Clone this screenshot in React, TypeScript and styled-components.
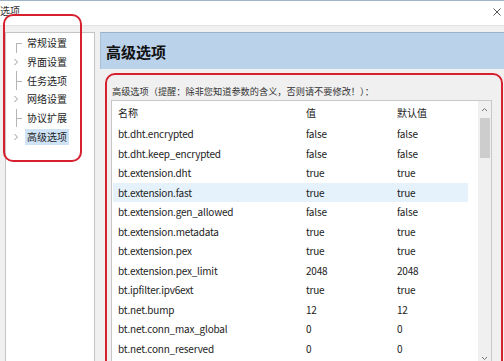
import React from 'react';
import styled, { createGlobalStyle } from 'styled-components';

const Global = createGlobalStyle`
  html, body { margin: 0; padding: 0; }
  body {
    width: 504px; height: 361px; overflow: hidden; background: #f0f0f0;
    font-family: "Noto Sans CJK SC", "Microsoft YaHei", sans-serif;
    color: #1e1e1e;
  }
`;

const Window = styled.div`
  position: relative;
  width: 504px;
  height: 361px;
  display: flex;
  flex-direction: column;
  overflow: hidden;
  background: #f0f0f0;
`;

const TitleBar = styled.div`
  height: 26px;
  box-sizing: border-box;
  background: #fff;
  border-top: 1px solid #9fb4c8;
  border-bottom: 1px solid #e2e2e2;
  display: flex;
  align-items: flex-start;
  justify-content: space-between;
  padding: 3px 3px 0 0;
  font-size: 10px;
  line-height: 14px;
  color: #333;
`;

const CloseIcon = styled.svg`
  width: 8px;
  height: 8px;
  margin-top: 4px;
`;

const Body = styled.div`
  flex: 1;
  display: flex;
  gap: 5px;
  padding: 6px 0 0 5px;
  min-height: 0;
`;

const Tree = styled.div`
  width: 88px;
  flex: none;
  background: #fff;
  border: 1px solid #c4c4c4;
  border-bottom: none;
  padding-top: 1px;
  display: flex;
  flex-direction: column;
`;

const TreeRow = styled.div`
  height: 18.7px;
  display: flex;
  align-items: center;
  padding-left: 6px;
`;

const Connector = styled.span<{ $first?: boolean }>`
  position: relative;
  width: 12px;
  height: 100%;
  flex: none;
  &::before {
    content: '';
    position: absolute;
    left: 4px;
    top: ${(p) => (p.$first ? '50%' : '0')};
    bottom: 0;
    border-left: 1px solid #b5b5b5;
  }
  &::after {
    content: '';
    position: absolute;
    left: 4px;
    width: 6px;
    top: 50%;
    border-top: 1px solid #b5b5b5;
  }
`;

const Chevron = styled.svg`
  width: 12px;
  height: 8px;
  flex: none;
`;

const TreeLabel = styled.span<{ $selected?: boolean }>`
  font-size: 10px;
  line-height: 16px;
  padding: 0 2px;
  margin-left: 1px;
  background: ${(p) => (p.$selected ? '#cfe3f7' : 'transparent')};
  color: #222;
  white-space: nowrap;
`;

const Main = styled.div`
  flex: 1;
  display: flex;
  flex-direction: column;
  min-width: 0;
`;

const Header = styled.div`
  height: 37px;
  box-sizing: border-box;
  flex: none;
  background: #bad2ea;
  border-top: 1px solid #99b2cc;
  border-left: 1px solid #a9c0d8;
  display: flex;
  align-items: center;
  padding-left: 5px;
  font-size: 15px;
  font-weight: bold;
  color: #111;
`;

const Content = styled.div`
  flex: 1;
  display: flex;
  flex-direction: column;
  padding: 0 12px 0 11px;
  min-height: 0;
`;

const GroupLabel = styled.div`
  height: 31px;
  box-sizing: border-box;
  padding-top: 15px;
  padding-left: 1px;
  font-size: 9.2px;
  line-height: 14px;
  color: #333;
  white-space: nowrap;
`;

const ListBox = styled.div`
  flex: 1;
  display: flex;
  background: #fff;
  border: 1px solid #c8c8c8;
  border-bottom: none;
  min-height: 0;
`;

const Rows = styled.div`
  flex: 1;
  display: flex;
  flex-direction: column;
  padding: 0 10px 0 1px;
`;

const Row = styled.div<{ $header?: boolean; $selected?: boolean }>`
  display: grid;
  grid-template-columns: 188px 91px 1fr;
  align-items: center;
  height: ${(p) => (p.$header ? '23px' : '19.5px')};
  padding-left: 5px;
  background: ${(p) => (p.$selected ? '#e5f1fb' : 'transparent')};
  font-size: 10px;
  letter-spacing: ${(p) => (p.$header ? '0' : '-0.2px')};
  color: #222;
  white-space: nowrap;
`;

const Cell = styled.span`
  overflow: hidden;
`;

const Scrollbar = styled.div`
  width: 13px;
  flex: none;
  background: #f0f0f0;
  display: flex;
  flex-direction: column;
  align-items: center;
  padding-top: 6px;
`;

const Arrow = styled.svg`
  width: 7px;
  height: 5px;
  flex: none;
`;

const Thumb = styled.div`
  width: 10px;
  height: 40px;
  margin-top: 6px;
  background: #cdcdcd;
`;

const Spacer = styled.div`
  flex: 1;
`;

const Annotation = styled.div<{ $x: number; $y: number; $w: number; $h: number }>`
  position: absolute;
  left: ${(p) => p.$x}px;
  top: ${(p) => p.$y}px;
  width: ${(p) => p.$w}px;
  height: ${(p) => p.$h}px;
  box-sizing: border-box;
  border: 2.5px solid #d6202e;
  border-radius: 10px;
  pointer-events: none;
`;

const treeItems: { label: string; expandable: boolean }[] = [
  { label: '常规设置', expandable: false },
  { label: '界面设置', expandable: true },
  { label: '任务选项', expandable: false },
  { label: '网络设置', expandable: true },
  { label: '协议扩展', expandable: false },
  { label: '高级选项', expandable: true },
];

const rows: [string, string, string][] = [
  ['bt.dht.encrypted', 'false', 'false'],
  ['bt.dht.keep_encrypted', 'false', 'false'],
  ['bt.extension.dht', 'true', 'true'],
  ['bt.extension.fast', 'true', 'true'],
  ['bt.extension.gen_allowed', 'false', 'false'],
  ['bt.extension.metadata', 'true', 'true'],
  ['bt.extension.pex', 'true', 'true'],
  ['bt.extension.pex_limit', '2048', '2048'],
  ['bt.ipfilter.ipv6ext', 'true', 'true'],
  ['bt.net.bump', '12', '12'],
  ['bt.net.conn_max_global', '0', '0'],
  ['bt.net.conn_reserved', '0', '0'],
];

export default function App() {
  return (
    <>
      <Global />
      <Window>
        <TitleBar>
          <span>选项</span>
          <CloseIcon viewBox="0 0 8 8">
            <path d="M0.5 0.5 L7.5 7.5 M7.5 0.5 L0.5 7.5" stroke="#555" strokeWidth="1" />
          </CloseIcon>
        </TitleBar>
        <Body>
          <Tree>
            {treeItems.map((it, i) => (
              <TreeRow key={it.label}>
                {it.expandable ? (
                  <Chevron viewBox="0 0 12 8">
                    <path d="M2.5 1 L5.5 4 L2.5 7" fill="none" stroke="#9a9a9a" strokeWidth="1" />
                  </Chevron>
                ) : (
                  <Connector $first={i === 0} />
                )}
                <TreeLabel $selected={i === treeItems.length - 1}>{it.label}</TreeLabel>
              </TreeRow>
            ))}
          </Tree>
          <Main>
            <Header>高级选项</Header>
            <Content>
              <GroupLabel>高级选项（提醒：除非您知道参数的含义，否则请不要修改！）：</GroupLabel>
              <ListBox>
                <Rows>
                  <Row $header>
                    <Cell>名称</Cell>
                    <Cell>值</Cell>
                    <Cell>默认值</Cell>
                  </Row>
                  {rows.map((r, i) => (
                    <Row key={r[0]} $selected={i === 3}>
                      <Cell>{r[0]}</Cell>
                      <Cell>{r[1]}</Cell>
                      <Cell>{r[2]}</Cell>
                    </Row>
                  ))}
                </Rows>
                <Scrollbar>
                  <Arrow viewBox="0 0 7 5">
                    <path d="M1 4 L3.5 1.5 L6 4" fill="none" stroke="#777" strokeWidth="1" />
                  </Arrow>
                  <Thumb />
                  <Spacer />
                  <Arrow viewBox="0 0 7 5">
                    <path d="M1 1 L3.5 3.5 L6 1" fill="none" stroke="#777" strokeWidth="1" />
                  </Arrow>
                </Scrollbar>
              </ListBox>
            </Content>
          </Main>
        </Body>
        <Annotation $x={3} $y={14} $w={79} $h={148} />
        <Annotation $x={105} $y={73} $w={398} $h={300} />
      </Window>
    </>
  );
}
